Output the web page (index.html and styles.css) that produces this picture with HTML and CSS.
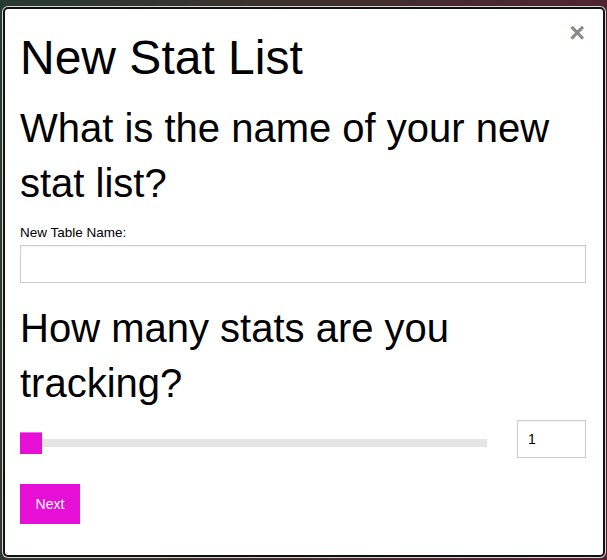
FILE: index.html
```html
<!DOCTYPE html>
<html>
<head>
<meta charset="utf-8">
<link rel="stylesheet" href="styles.css">
</head>
<body>
<div class="modal">
  <button class="close" aria-label="Close">×</button>
  <h1 class="title">New Stat List</h1>
  <h2 class="question">What is the name of your new stat list?</h2>
  <label class="label" for="tname">New Table Name:</label>
  <input id="tname" class="text-input" type="text">
  <h2 class="question q2">How many stats are you tracking?</h2>
  <div class="slider-row">
    <input class="range" type="range" min="1" max="20" value="1">
    <input class="num" type="number" value="1">
  </div>
  <button class="next">Next</button>
</div>
</body>
</html>
```
FILE: styles.css
```css
html, body {
  margin: 0;
  padding: 0;
  height: 100%;
}
body {
  background: linear-gradient(100deg, #283b32 0%, #3d2f2b 45%, #552033 100%);
  font-family: "Liberation Sans", Arial, sans-serif;
  overflow: hidden;
}
.modal {
  position: relative;
  box-sizing: border-box;
  margin: 7px 0 0 3px;
  width: 602px;
  height: 550px;
  background: #fff;
  border: 2px solid #111;
  border-radius: 5px;
  box-shadow: 0 0 0 1px #d8d8d8;
  padding: 0 17px 0 15px;
}
.close {
  position: absolute;
  top: 9px;
  right: 18px;
  border: 0;
  background: none;
  padding: 0;
  font-family: "Liberation Sans", Arial, sans-serif;
  font-size: 27px;
  font-weight: bold;
  line-height: 30px;
  color: #888;
}
.title {
  margin: 21px 0 0;
  font-size: 48px;
  font-weight: normal;
  line-height: 55px;
  color: #000;
}
.question {
  margin: 16px 0 0;
  font-size: 40px;
  font-weight: normal;
  line-height: 55px;
  color: #000;
}
.q2 {
  margin-top: 18px;
}
.label {
  display: block;
  margin-top: 14px;
  font-size: 13.5px;
  line-height: 15px;
  color: #000;
}
.text-input {
  display: block;
  box-sizing: border-box;
  margin-top: 5px;
  width: 100%;
  height: 38px;
  border: 1px solid #ccc;
  box-shadow: inset 0 1px 2px rgba(0,0,0,0.06);
  padding: 0 10px;
  font-family: "Liberation Sans", Arial, sans-serif;
  font-size: 14px;
  outline: none;
}
.slider-row {
  display: flex;
  align-items: flex-start;
  margin-top: 9px;
}
.range {
  -webkit-appearance: none;
  appearance: none;
  flex: 1;
  margin: 12px 30px 0 0;
  height: 22px;
  background: transparent;
  padding: 0;
}
.range::-webkit-slider-runnable-track {
  height: 8px;
  background: #e4e4e4;
  border: 0;
}
.range::-webkit-slider-thumb {
  -webkit-appearance: none;
  appearance: none;
  width: 22px;
  height: 22px;
  margin-top: -7px;
  background: #e50fd6;
  border: 0;
  border-top: 1px solid #f06ae6;
  box-sizing: border-box;
  border-radius: 0;
}
.num {
  box-sizing: border-box;
  width: 69px;
  height: 38px;
  border: 1px solid #ccc;
  box-shadow: inset 0 1px 2px rgba(0,0,0,0.06);
  padding: 0 10px;
  font-family: "Liberation Sans", Arial, sans-serif;
  font-size: 14px;
  color: #000;
  outline: none;
  -moz-appearance: textfield;
}
.num::-webkit-inner-spin-button,
.num::-webkit-outer-spin-button {
  -webkit-appearance: none;
  margin: 0;
}
.next {
  display: block;
  margin-top: 26px;
  width: 60px;
  height: 40px;
  border: 0;
  background: #e50fd6;
  color: #fff;
  font-family: "Liberation Sans", Arial, sans-serif;
  font-size: 14px;
  padding: 0;
}
```
